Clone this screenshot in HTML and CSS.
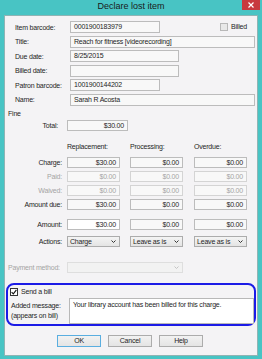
FILE: index.html
```html
<!DOCTYPE html>
<html lang="en">
    <head>
        <meta charset="utf-8">
        <link rel="stylesheet" href="styles.css">
    </head>
    <body>
        <div class="window">
            <div class="titlebar">
                <span></span>
                <span class="title">Declare lost item</span>
                <span class="close">
                    <svg width="6" height="6" viewBox="0 0 6 6"><path d="M0.5 0.5 L5.5 5.5 M5.5 0.5 L0.5 5.5" stroke="#fff" stroke-width="1.2"/></svg>
                </span>
            </div>
            <div class="content">
                <div class="info">
                    <span>Item barcode:</span>
                    <div class="line">
                        <div class="box w90">0001900183979</div>
                        <div class="check-item billed"><span class="checkbox off"></span>Billed</div>
                    </div>
                    <span>Title:</span>
                    <div class="box wide">Reach for fitness [videorecording]</div>
                    <span>Due date:</span>
                    <div class="box w109">8/25/2015</div>
                    <span>Billed date:</span>
                    <div class="box w109"></div>
                    <span>Patron barcode:</span>
                    <div class="box w90">1001900144202</div>
                    <span>Name:</span>
                    <div class="box wide">Sarah R Acosta</div>
                </div>

                <div class="fine-title">Fine</div>

                <div class="mrow total">
                    <span class="lbl">Total:</span>
                    <div class="box money w61">$30.00</div>
                </div>

                <div class="mrow heads">
                    <span></span>
                    <span>Replacement:</span>
                    <span>Processing:</span>
                    <span>Overdue:</span>
                </div>

                <div class="mrow first">
                    <span class="lbl">Charge:</span>
                    <div class="box money">$30.00</div>
                    <div class="box money">$0.00</div>
                    <div class="box money">$0.00</div>
                </div>
                <div class="mrow dim">
                    <span class="lbl">Paid:</span>
                    <div class="box money">$0.00</div>
                    <div class="box money">$0.00</div>
                    <div class="box money">$0.00</div>
                </div>
                <div class="mrow dim">
                    <span class="lbl">Waived:</span>
                    <div class="box money">$0.00</div>
                    <div class="box money">$0.00</div>
                    <div class="box money">$0.00</div>
                </div>
                <div class="mrow">
                    <span class="lbl">Amount due:</span>
                    <div class="box money">$30.00</div>
                    <div class="box money">$0.00</div>
                    <div class="box money">$0.00</div>
                </div>

                <div class="mrow amount">
                    <span class="lbl">Amount:</span>
                    <div class="box money edit">$30.00</div>
                    <div class="box money">$0.00</div>
                    <div class="box money">$0.00</div>
                </div>
                <div class="mrow actions">
                    <span class="lbl">Actions:</span>
                    <div class="select"><span>Charge</span><svg width="5" height="3" viewBox="0 0 5 3"><path d="M0.5 0.5 L2.5 2.5 L4.5 0.5" stroke="#333" fill="none"/></svg></div>
                    <div class="select"><span>Leave as is</span><svg width="5" height="3" viewBox="0 0 5 3"><path d="M0.5 0.5 L2.5 2.5 L4.5 0.5" stroke="#333" fill="none"/></svg></div>
                    <div class="select"><span>Leave as is</span><svg width="5" height="3" viewBox="0 0 5 3"><path d="M0.5 0.5 L2.5 2.5 L4.5 0.5" stroke="#333" fill="none"/></svg></div>
                </div>

                <div class="payrow">
                    <span>Payment method:</span>
                    <div class="select off"><span></span><svg width="5" height="3" viewBox="0 0 5 3"><path d="M0.5 0.5 L2.5 2.5 L4.5 0.5" stroke="#c4c4c4" fill="none"/></svg></div>
                </div>

                <div class="bill">
                    <div class="check-item"><span class="checkbox on"><svg width="6" height="6" viewBox="0 0 6 6"><path d="M0.6 3.2 L2.3 4.9 L5.4 0.9" stroke="#111" stroke-width="1.1" fill="none"/></svg></span>Send a bill</div>
                    <div class="msg-row">
                        <span class="msg-label">Added message:<br>(appears on bill)</span>
                        <div class="msg">Your library account has been billed for this charge.</div>
                    </div>
                </div>

                <div class="buttons">
                    <div class="btn default">OK</div>
                    <div class="btn">Cancel</div>
                    <div class="btn">Help</div>
                </div>
            </div>
        </div>
    </body>
</html>
```

FILE: styles.css
```css
* {
    box-sizing: border-box;
}

body {
    margin: 0;
    padding: 0;
    background-color: #48c4c4;
    font-family: "Liberation Sans", Arial, sans-serif;
    font-size: 7px;
    letter-spacing: -0.2px;
    color: #1e1e1e;
}

.window {
    width: 262px;
    height: 359px;
    display: flex;
    flex-direction: column;
    background-color: #48c4c4;
}

.titlebar {
    height: 15px;
    display: grid;
    grid-template-columns: 1fr auto 1fr;
}

.title {
    font-size: 9px;
    letter-spacing: 0;
    line-height: 13px;
    color: #1a1a1a;
}

.close {
    justify-self: end;
    width: 18px;
    height: 10px;
    margin-right: 2px;
    background-color: #c8393e;
    display: flex;
    align-items: center;
    justify-content: center;
}

.content {
    flex: 1;
    margin: 0 4px 3px 4px;
    background-color: #f4f3f5;
    border: 1px solid #8fb4b4;
}

.info {
    display: grid;
    grid-template-columns: 55px 185px;
    row-gap: 2.6px;
    align-items: center;
    padding-left: 10px;
    margin-top: 5px;
    white-space: nowrap;
}

.line {
    display: flex;
    align-items: center;
}

.box {
    height: 12px;
    border: 1px solid #bcbcbc;
    background-color: #f8f8f8;
    padding: 0 3px;
    line-height: 10px;
    white-space: nowrap;
    overflow: hidden;
}

.w90 { width: 90px; }
.w109 { width: 109px; }
.w61 { width: 61px; }
.wide { width: 185px; }

.check-item {
    display: flex;
    align-items: center;
    line-height: 10px;
}

.billed {
    margin-left: 60px;
}

.checkbox {
    width: 8px;
    height: 8px;
    margin-right: 3px;
    border: 1px solid #333;
    background-color: #fff;
    display: flex;
    align-items: center;
    justify-content: center;
}

.checkbox.off {
    border-color: #b8b8b8;
    background-color: #e8e8e8;
}

.fine-title {
    margin: 3px 0 0 3px;
    line-height: 10px;
}

.mrow {
    display: grid;
    grid-template-columns: 62px 63px 64px 53px;
    align-items: center;
    height: 11px;
    margin-top: 3px;
    white-space: nowrap;
}

.mrow .lbl {
    text-align: right;
    padding-right: 5px;
}

.mrow .box {
    width: 53px;
    height: 11px;
    line-height: 9px;
}

.mrow .box.w61 {
    width: 61px;
}

.money {
    text-align: right;
}

.total {
    margin-top: 1px;
}

.total .lbl {
    padding-right: 9px;
}

.heads {
    height: 10px;
    margin-top: 11px;
}

.first {
    margin-top: 5px;
}

.dim {
    color: #a4a4a4;
}

.dim .box {
    border-color: #d4d4d4;
}

.amount {
    margin-top: 9px;
}

.box.edit {
    background-color: #fff;
}

.actions {
    margin-top: 6px;
}

.select {
    width: 53px;
    height: 11px;
    border: 1px solid #acacac;
    background: linear-gradient(#f4f4f4, #e4e4e4);
    display: flex;
    align-items: center;
    justify-content: space-between;
    padding: 0 3px 0 2px;
    line-height: 9px;
    white-space: nowrap;
}

.payrow {
    display: flex;
    align-items: center;
    height: 11px;
    margin-top: 15px;
    padding-left: 3px;
    color: #a4a4a4;
}

.payrow span {
    width: 59px;
    white-space: nowrap;
}

.select.off {
    width: 116px;
    border-color: #dedede;
    background: #f2f2f2;
}

.bill {
    height: 43px;
    margin: 10px 1px 0 1px;
    border: 2px solid #1b1be6;
    border-radius: 8px;
    padding: 2px 0 0 2px;
}

.msg-row {
    display: flex;
    margin-top: 1px;
}

.msg-label {
    width: 59px;
    padding-left: 1px;
    line-height: 10px;
    padding-top: 3px;
    white-space: nowrap;
}

.msg {
    width: 185px;
    height: 26px;
    border: 1px solid #b8b8b8;
    background-color: #fff;
    padding: 1px 3px;
    line-height: 10px;
    white-space: nowrap;
}

.buttons {
    display: flex;
    gap: 7px;
    margin-top: 9px;
    padding-left: 52px;
}

.btn {
    width: 44px;
    height: 12px;
    border: 1px solid #acacac;
    background: linear-gradient(#f2f2f2, #e4e4e4);
    text-align: center;
    line-height: 10px;
}

.btn.default {
    border-color: #5aaee0;
}
```
